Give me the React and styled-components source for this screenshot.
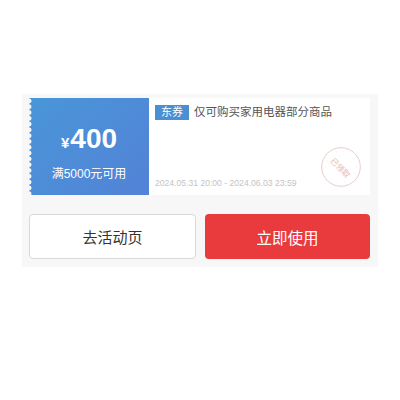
import React from "react";
import styled, { createGlobalStyle } from "styled-components";

const GlobalStyle = createGlobalStyle`
  html, body {
    margin: 0;
    padding: 0;
    background: #fff;
    font-family: "Liberation Sans", "Noto Sans CJK SC", sans-serif;
  }
`;

const App = () => {
  return (
    <Page>
      <GlobalStyle />
      <Panel>
        <Coupon>
          <Amount>
            <Price>
              <small>¥</small>400
            </Price>
            <Condition>满5000元可用</Condition>
          </Amount>
          <Detail>
            <Title>
              <Tag>东券</Tag>
              <span>仅可购买家用电器部分商品</span>
            </Title>
            <Dates>2024.05.31 20:00 - 2024.06.03 23:59</Dates>
            <Stamp>
              <svg width="40" height="40" viewBox="0 0 40 40">
                <circle cx="20" cy="20" r="19.3" fill="none" stroke="#e8cccc" strokeWidth="1" />
                <circle cx="20" cy="20" r="15.5" fill="none" stroke="#efdcdc" strokeWidth="0.8" strokeDasharray="0.8 6" />
              </svg>
              <StampText>已领取</StampText>
            </Stamp>
          </Detail>
        </Coupon>
        <Actions>
          <ActionButton>去活动页</ActionButton>
          <ActionButton $primary>立即使用</ActionButton>
        </Actions>
      </Panel>
    </Page>
  );
};

const Page = styled.div`
  width: 400px;
  height: 400px;
  padding: 94px 22px 0;
  box-sizing: border-box;
  overflow: hidden;
`;

const Panel = styled.div`
  height: 173px;
  box-sizing: border-box;
  padding: 4px 8px 8px 7px;
  background: #f7f7f7;
`;

const Coupon = styled.div`
  display: flex;
  height: 97px;
  background: #fff;
`;

const Amount = styled.div`
  position: relative;
  flex: 0 0 120px;
  display: flex;
  flex-direction: column;
  align-items: center;
  padding-top: 25px;
  box-sizing: border-box;
  color: #fff;
  background: linear-gradient(135deg, #4a96d9, #5282d6);

  &::before {
    content: "";
    position: absolute;
    left: 0;
    top: 0;
    bottom: 0;
    width: 3px;
    background: radial-gradient(circle at 0 50%, #f7f7f7 2.2px, transparent 2.8px) 0 0 / 3px 5.8px repeat-y;
  }
`;

const Price = styled.div`
  font-size: 28px;
  font-weight: 700;
  line-height: 32px;

  small {
    font-size: 15px;
    margin-right: 1px;
  }
`;

const Condition = styled.div`
  margin-top: 7px;
  font-size: 12px;
  line-height: 16px;
`;

const Detail = styled.div`
  position: relative;
  flex: 1;
  min-width: 0;
  padding: 6px 0 0 6px;
`;

const Title = styled.div`
  display: flex;
  align-items: center;
  gap: 5px;
  font-size: 11.5px;
  line-height: 16px;
  color: #555;
  white-space: nowrap;
`;

const Tag = styled.span`
  width: 34px;
  height: 15px;
  line-height: 15px;
  font-size: 11px;
  text-align: center;
  color: #fff;
  background: #4a8fd3;
`;

const Dates = styled.div`
  position: absolute;
  left: 6px;
  bottom: 6px;
  font-size: 8.6px;
  line-height: 12px;
  color: #c4c4c4;
  white-space: nowrap;
`;

const Stamp = styled.div`
  position: absolute;
  right: 9px;
  bottom: 8px;
  width: 40px;
  height: 40px;
`;

const StampText = styled.div`
  position: absolute;
  inset: 0;
  display: flex;
  align-items: center;
  justify-content: center;
  font-size: 8px;
  color: #e3b5b5;
  transform: rotate(45deg);
  white-space: nowrap;
`;

const Actions = styled.div`
  display: grid;
  grid-template-columns: 167px 165px;
  column-gap: 9px;
  margin-top: 19px;
`;

const ActionButton = styled.div`
  height: 45px;
  display: flex;
  align-items: center;
  justify-content: center;
  box-sizing: border-box;
  border-radius: 4px;
  font-size: ${(p) => (p.$primary ? "15.5px" : "15px")};
  color: ${(p) => (p.$primary ? "#fff" : "#333")};
  background: ${(p) => (p.$primary ? "#e93b3d" : "#fff")};
  border: ${(p) => (p.$primary ? "none" : "1px solid #d8d8d8")};
`;

export default App;
